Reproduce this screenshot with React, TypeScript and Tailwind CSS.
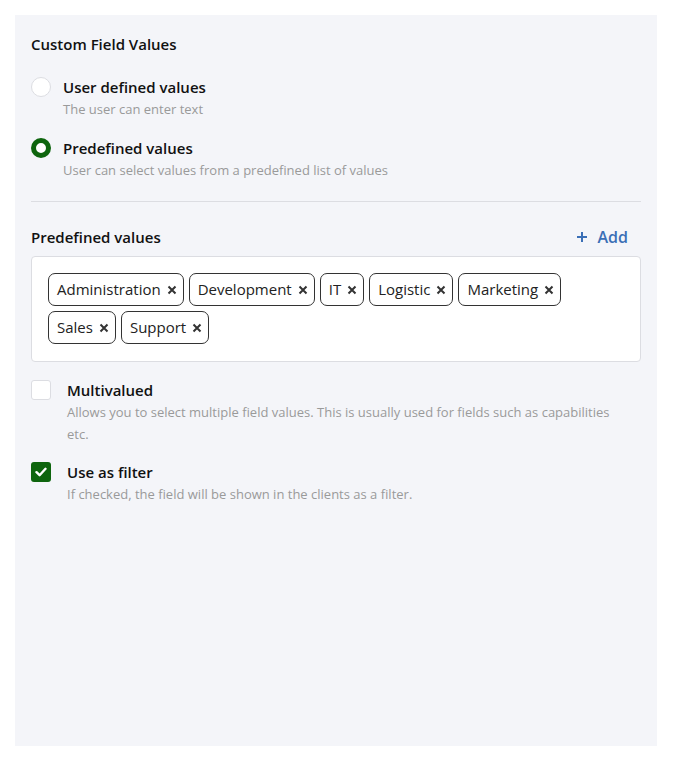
import { useState } from "react";

const values = ["Administration", "Development", "IT", "Logistic", "Marketing", "Sales", "Support"];

const font = { fontFamily: '"Segoe UI", "Open Sans", "Noto Sans", sans-serif' };

function Radio({ checked, label, hint }: { checked: boolean; label: string; hint: string }) {
  return (
    <div className="flex gap-3">
      <span
        className={
          checked
            ? "mt-[1px] h-5 w-5 shrink-0 rounded-full border-[5px] border-[#0e650e] bg-white"
            : "mt-[1px] h-5 w-5 shrink-0 rounded-full border border-[#dcdde2] bg-white"
        }
      />
      <div>
        <p className="text-[15px] font-semibold leading-[22px] text-[#111]">{label}</p>
        <p className="text-[13px] leading-[22px] text-[#9a9a9a]">{hint}</p>
      </div>
    </div>
  );
}

function Check({ checked, label, hint }: { checked: boolean; label: string; hint: string }) {
  return (
    <div className="flex gap-4">
      <span
        className={
          checked
            ? "mt-[1px] flex h-5 w-5 shrink-0 items-center justify-center rounded-[3px] bg-[#0e650e]"
            : "mt-[1px] h-5 w-5 shrink-0 rounded-[3px] border border-[#dcdde2] bg-white"
        }
      >
        {checked && (
          <svg width="12" height="10" viewBox="0 0 12 10">
            <path d="M1.5 5.2 4.6 8.2 10.5 1.8" fill="none" stroke="white" strokeWidth="2.4" strokeLinecap="round" strokeLinejoin="round" />
          </svg>
        )}
      </span>
      <div className="max-w-[555px]">
        <p className="text-[15px] font-semibold leading-[22px] text-[#111]">{label}</p>
        <p className="text-[13px] leading-[22px] text-[#9a9a9a]">{hint}</p>
      </div>
    </div>
  );
}

export default function App() {
  const [tags, setTags] = useState(values);

  return (
    <div className="min-h-screen bg-white p-[15px]" style={font}>
      <div className="h-[731px] w-[642px] bg-[#f4f5f9] px-4 pt-[19px]">
        <h2 className="text-[15px] font-semibold leading-5 text-[#111]">Custom Field Values</h2>

        <div className="mt-[22px] flex flex-col gap-[17px]">
          <Radio checked={false} label="User defined values" hint="The user can enter text" />
          <Radio checked label="Predefined values" hint="User can select values from a predefined list of values" />
        </div>

        <hr className="mt-[20px] border-[#dcdde2]" />

        <div className="mt-[24px] flex items-center justify-between pr-[13px]">
          <span className="text-[15px] font-semibold leading-[22px] text-[#111]">Predefined values</span>
          <button className="flex items-center gap-[10px] text-[16px] font-semibold leading-[22px] text-[#3b6fb6]">
            <svg width="12" height="12" viewBox="0 0 12 12">
              <path d="M6 1v10M1 6h10" stroke="currentColor" strokeWidth="2" />
            </svg>
            Add
          </button>
        </div>

        <div className="mt-[8px] flex flex-wrap gap-[5px] rounded border border-[#dcdde2] bg-white px-4 pb-[17px] pt-4">
          {tags.map((t) => (
            <span
              key={t}
              className="flex h-[33px] items-center gap-[6px] rounded-[7px] border border-[#333] pl-[8px] pr-[6px] text-[15px] text-[#222]"
            >
              {t}
              <button onClick={() => setTags(tags.filter((x) => x !== t))} className="flex items-center">
                <svg width="10" height="10" viewBox="0 0 10 10">
                  <path d="M1.5 1.5l7 7M8.5 1.5l-7 7" stroke="#333" strokeWidth="2" />
                </svg>
              </button>
            </span>
          ))}
        </div>

        <div className="mt-[17px] flex flex-col gap-[16px]">
          <Check
            checked={false}
            label="Multivalued"
            hint="Allows you to select multiple field values. This is usually used for fields such as capabilities etc."
          />
          <Check checked label="Use as filter" hint="If checked, the field will be shown in the clients as a filter." />
        </div>
      </div>
    </div>
  );
}
